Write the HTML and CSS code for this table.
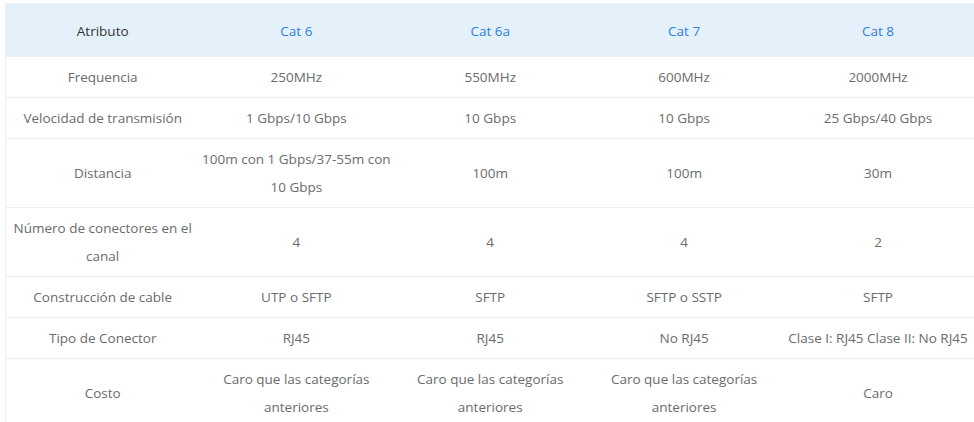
FILE: index.html
```html
<!DOCTYPE html>
<html lang="es">
<head>
<meta charset="utf-8">
<link rel="stylesheet" href="styles.css">
</head>
<body>
<table class="spec">
  <thead>
    <tr>
      <th class="attr">Atributo</th>
      <th>Cat 6</th>
      <th>Cat 6a</th>
      <th>Cat 7</th>
      <th>Cat 8</th>
    </tr>
  </thead>
  <tbody>
    <tr><td>Frequencia</td><td>250MHz</td><td>550MHz</td><td>600MHz</td><td>2000MHz</td></tr>
    <tr><td>Velocidad de transmisión</td><td>1 Gbps/10 Gbps</td><td>10 Gbps</td><td>10 Gbps</td><td>25 Gbps/40 Gbps</td></tr>
    <tr><td>Distancia</td><td>100m con 1 Gbps/37-55m con 10 Gbps</td><td>100m</td><td>100m</td><td>30m</td></tr>
    <tr><td>Número de conectores en el canal</td><td>4</td><td>4</td><td>4</td><td>2</td></tr>
    <tr><td>Construcción de cable</td><td>UTP o SFTP</td><td>SFTP</td><td>SFTP o SSTP</td><td>SFTP</td></tr>
    <tr><td>Tipo de Conector</td><td>RJ45</td><td>RJ45</td><td>No RJ45</td><td>Clase I: RJ45 Clase II: No RJ45</td></tr>
    <tr><td>Costo</td><td>Caro que las categorías anteriores</td><td>Caro que las categorías anteriores</td><td>Caro que las categorías anteriores</td><td>Caro</td></tr>
  </tbody>
</table>
</body>
</html>
```
FILE: styles.css
```css
html, body {
  margin: 0;
  padding: 0;
  background: #ffffff;
  overflow: hidden;
}
body {
  padding: 3px 0 0 5px;
  font-family: "Open Sans", "Liberation Sans", sans-serif;
  font-size: 13.5px;
}
.spec {
  width: 970px;
  table-layout: fixed;
  border-collapse: collapse;
  border-top: 1px solid #efefef;
  border-left: 1px solid #efefef;
}
.spec th {
  background: #e5f1fa;
  font-weight: normal;
  color: #2b7fd6;
  line-height: 28px;
  padding: 13px 0 12px;
  text-align: center;
}
.spec th.attr {
  color: #333333;
}
.spec td {
  color: #6b6b6b;
  line-height: 28px;
  padding: 6px 0;
  text-align: center;
  border-bottom: 1px solid #eeeeee;
}
```
